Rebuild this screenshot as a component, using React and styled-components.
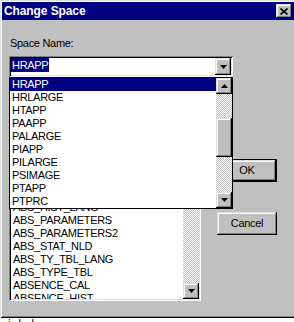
import React from 'react';
import styled, { createGlobalStyle } from 'styled-components';

const Global = createGlobalStyle`
  html, body { margin: 0; padding: 0; background: #ffffff; }
  body {
    width: 294px; height: 322px; overflow: hidden;
    font-family: "Liberation Sans", Arial, sans-serif;
    font-size: 11px;
    letter-spacing: -0.3px;
  }
`;

const raised = `box-shadow: inset -1px -1px #000, inset 1px 1px #dfdfdf, inset -2px -2px #808080, inset 2px 2px #fff;`;
const sunken = `box-shadow: inset 1px 1px #808080, inset -1px -1px #fff, inset 2px 2px #000, inset -2px -2px #dfdfdf;`;
const checker = `background: repeating-conic-gradient(#c0c0c0 0% 25%, #ffffff 0% 50%) 0 0 / 2px 2px;`;

const Window = styled.div`
  width: 296px;
  height: 318px;
  box-sizing: border-box;
  padding: 2px;
  background: #c0c0c0;
  box-shadow: inset 1px 1px #dfdfdf, inset -1px -1px #000, inset 2px 2px #fff, inset -2px -2px #808080;
  display: flex;
  flex-direction: column;
`;

const TitleBar = styled.div`
  height: 18px;
  flex: none;
  background: #000080;
  display: flex;
  align-items: center;
  justify-content: space-between;
  padding: 0 2px 0 2px;
`;

const Title = styled.span`
  color: #fff;
  font-weight: bold;
  font-size: 12px;
  letter-spacing: -0.1px;
  line-height: 18px;
`;

const CloseButton = styled.div`
  width: 16px;
  height: 14px;
  background: #c0c0c0;
  ${raised}
  display: flex;
  align-items: center;
  justify-content: center;
`;

const Body = styled.div`
  position: relative;
  flex: 1;
  padding: 17px 0 0 7px;
  display: flex;
  flex-direction: column;
`;

const Label = styled.div`
  line-height: 13px;
  height: 13px;
  padding-left: 1px;
  color: #000;
`;

const Combo = styled.div`
  margin-top: 6px;
  width: 224px;
  height: 21px;
  box-sizing: border-box;
  padding: 2px;
  background: #fff;
  ${sunken}
  display: flex;
`;

const ComboText = styled.div`
  flex: 1;
  display: flex;
  align-items: flex-start;
`;

const Selected = styled.span`
  background: #000080;
  color: #fff;
  line-height: 14px;
  height: 14px;
  padding: 0 1px 0 1px;
`;

const ArrowButton = styled.div`
  width: 16px;
  height: ${p => p.$h || 16}px;
  flex: none;
  box-sizing: border-box;
  background: #c0c0c0;
  ${raised}
  display: flex;
  align-items: center;
  justify-content: center;
`;

const LowerRow = styled.div`
  margin-top: 18px;
  display: flex;
  gap: 16px;
`;

const ListBox = styled.div`
  width: 192px;
  height: 206px;
  box-sizing: border-box;
  padding: 2px;
  background: #fff;
  ${sunken}
  display: flex;
`;

const Items = styled.div`
  flex: 1;
  overflow: hidden;
`;

const Item = styled.div`
  height: 13px;
  line-height: 13px;
  padding-left: 2px;
  white-space: nowrap;
  color: ${p => (p.$active ? '#fff' : '#000')};
  background: ${p => (p.$active ? '#000080' : 'transparent')};
  visibility: ${p => (p.$occluded ? 'hidden' : 'visible')};
`;

const ScrollBar = styled.div`
  width: 16px;
  flex: none;
  display: flex;
  flex-direction: column;
`;

const Track = styled.div`
  ${checker}
  flex: ${p => (p.$h ? 'none' : '1')};
  height: ${p => (p.$h ? `${p.$h}px` : 'auto')};
`;

const Thumb = styled.div`
  height: ${p => p.$h}px;
  flex: none;
  background: #c0c0c0;
  ${raised}
`;

const Buttons = styled.div`
  width: 60px;
  display: flex;
  flex-direction: column;
  padding-top: 64px;
`;

const Button = styled.div`
  height: 23px;
  box-sizing: border-box;
  margin-top: ${p => p.$mt || 0}px;
  background: #c0c0c0;
  border: ${p => (p.$default ? '1px solid #000' : '0')};
  ${raised}
  display: flex;
  align-items: center;
  justify-content: center;
  color: #000;
  line-height: 13px;
`;

const Dropdown = styled.div`
  position: absolute;
  left: 7px;
  top: 57px;
  width: 224px;
  height: 132px;
  box-sizing: border-box;
  border: 1px solid #000;
  background: #fff;
  display: flex;
`;

const Footer = styled.div`
  height: 4px;
  overflow: hidden;
  background: #fff;
  padding-left: 8px;
`;

const FooterText = styled.div`
  margin-top: -1px;
  line-height: 13px;
  white-space: pre;
  color: #000;
`;

const Down = () => (
  <svg width="7" height="4" viewBox="0 0 7 4"><polygon points="0,0 7,0 3.5,4" fill="#000" /></svg>
);
const Up = () => (
  <svg width="7" height="4" viewBox="0 0 7 4"><polygon points="0,4 7,4 3.5,0" fill="#000" /></svg>
);
const XGlyph = () => (
  <svg width="8" height="7" viewBox="0 0 8 7">
    <path d="M0.5 0.5 L7.5 6.5 M7.5 0.5 L0.5 6.5" stroke="#000" strokeWidth="1.6" />
  </svg>
);

const dropItems = ['HRAPP', 'HRLARGE', 'HTAPP', 'PAAPP', 'PALARGE', 'PIAPP', 'PILARGE', 'PSIMAGE', 'PTAPP', 'PTPRC'];

const tables = [
  'ABS_ACCRUAL', 'ABS_ALIAS_TBL', 'ABS_CLASS_TBL', 'ABS_DEFN_TBL', 'ABS_EE_REQUEST',
  'ABS_HIST', 'ABS_HIST_DET', 'ABS_HIST_EXT', 'ABS_HIST_LANG',
  'ABS_PARAMETERS', 'ABS_PARAMETERS2', 'ABS_STAT_NLD', 'ABS_TY_TBL_LANG',
  'ABS_TYPE_TBL', 'ABSENCE_CAL', 'ABSENCE_HIST',
];

export default function App() {
  return (
    <>
      <Global />
      <Window>
        <TitleBar>
          <Title>Change Space</Title>
          <CloseButton><XGlyph /></CloseButton>
        </TitleBar>
        <Body>
          <Label>Space Name:</Label>
          <Combo>
            <ComboText><Selected>HRAPP</Selected></ComboText>
            <ArrowButton $h={17}><Down /></ArrowButton>
          </Combo>
          <LowerRow>
            <ListBox>
              <Items>
                {tables.map((t, i) => <Item key={t} $occluded={i < 8}>{t}</Item>)}
              </Items>
              <ScrollBar>
                <ArrowButton><Up /></ArrowButton>
                <Thumb $h={30} />
                <Track />
                <ArrowButton><Down /></ArrowButton>
              </ScrollBar>
            </ListBox>
            <Buttons>
              <Button $default>OK</Button>
              <Button $mt={30}>Cancel</Button>
            </Buttons>
          </LowerRow>
          <Dropdown>
            <Items>
              {dropItems.map((d, i) => <Item key={d} $active={i === 0}>{d}</Item>)}
            </Items>
            <ScrollBar>
              <ArrowButton><Up /></ArrowButton>
              <Track $h={24} />
              <Thumb $h={39} />
              <Track />
              <ArrowButton><Down /></ArrowButton>
            </ScrollBar>
          </Dropdown>
        </Body>
      </Window>
      <Footer>
        <FooterText>{'i   l    l'}</FooterText>
      </Footer>
    </>
  );
}
